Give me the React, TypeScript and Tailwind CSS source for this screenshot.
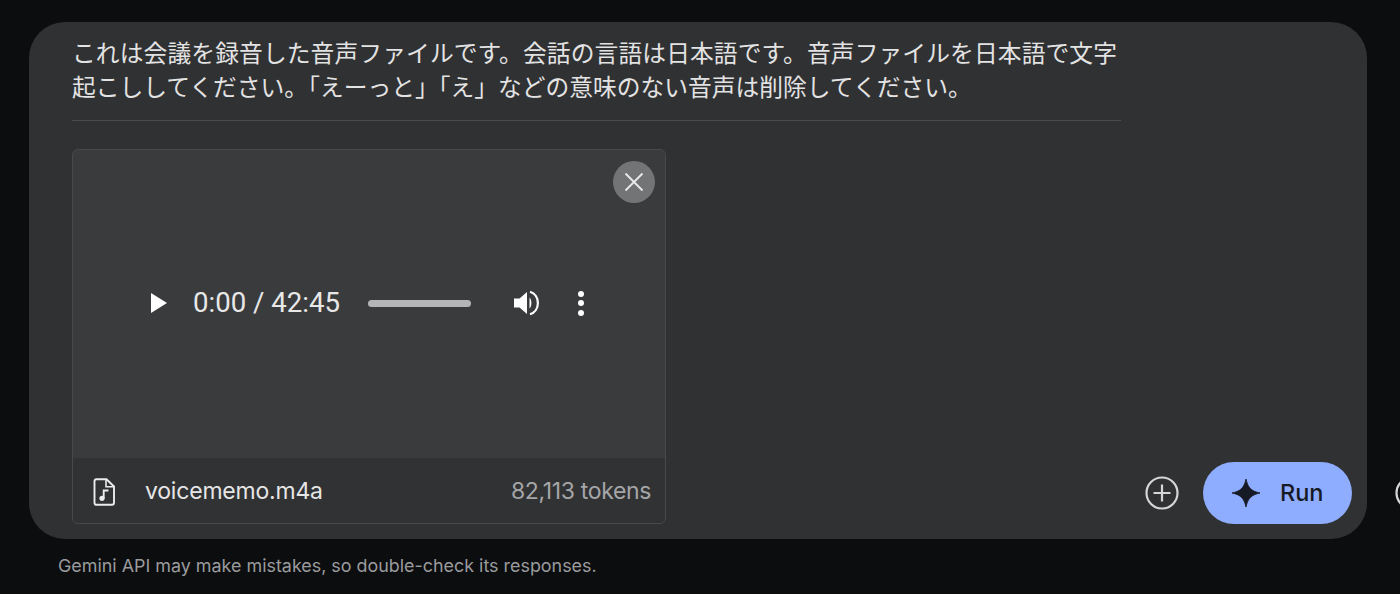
import React from "react";

const CJK = "font-['Inter','Noto_Sans_CJK_JP',sans-serif]";

const AudioBar = () => {
  return (
    <div className="flex h-[308px] items-center pb-[2px] pl-[77px]">
      <svg width="20" height="22" viewBox="0 0 20 22" className="mr-[24px] -ml-[1px]">
        <path d="M2 1 L18 11 L2 21 Z" fill="#fff" />
      </svg>
      <span className="w-[148px] whitespace-nowrap text-[27.6px] leading-none text-[#e8e8e8] font-['Roboto',sans-serif]">
        0:00 / 42:45
      </span>
      <div className="ml-[27px] h-[7px] w-[103px] rounded-full bg-[#b5b5b5]" />
      <svg width="28" height="28" viewBox="0 0 28 28" className="ml-[42px]">
        <path d="M1 9.5 H6.5 L14 3 V25 L6.5 18.5 H1 Z" fill="#fff" />
        <path d="M16.5 8.5 C19 10.5 19 17.5 16.5 19.5 Z" fill="#fff" />
        <path d="M17 2.8 C27.5 6 27.5 22 17 25.2" fill="none" stroke="#fff" strokeWidth="2.2" />
      </svg>
      <div className="ml-[37px] flex flex-col gap-[3.5px]">
        <div className="h-[6px] w-[6px] rounded-full bg-white" />
        <div className="h-[6px] w-[6px] rounded-full bg-white" />
        <div className="h-[6px] w-[6px] rounded-full bg-white" />
      </div>
    </div>
  );
};

const AudioCard = () => {
  return (
    <div className="relative w-[594px] overflow-hidden rounded-[6px] border border-[#48494b] bg-[#3a3b3d]">
      <button className="absolute top-[11px] right-[10px] flex h-[42px] w-[42px] items-center justify-center rounded-full bg-[#737476]">
        <svg width="22" height="22" viewBox="0 0 22 22" fill="none" stroke="#ebebeb" strokeWidth="1.8">
          <path d="M2.5 2.5 L19.5 19.5 M19.5 2.5 L2.5 19.5" />
        </svg>
      </button>
      <AudioBar />
      <div className="flex h-[65px] items-center bg-[#313234] pt-[2px] pr-[14px] pl-[20px]">
        <svg width="24" height="28" viewBox="0 0 24 28" fill="none" className="mr-[29px] -ml-[1px]">
          <path
            d="M2.5 3.2 C2.5 2 3.2 1.2 4.5 1.2 H14.5 L22 8.5 V24.8 C22 26 21.2 26.8 20 26.8 H4.5 C3.2 26.8 2.5 26 2.5 24.8 Z"
            stroke="#ececec"
            strokeWidth="1.9"
          />
          <path d="M14 1.5 V8.8 H21.5" stroke="#ececec" strokeWidth="1.6" />
          <circle cx="10" cy="20.3" r="2.6" fill="#ececec" />
          <path d="M11.7 20.3 V12.5 H16.5" stroke="#ececec" strokeWidth="1.9" />
        </svg>
        <span className="text-[23px] leading-none text-[#e6e6e6] font-['Inter',sans-serif] tracking-[-0.2px]">
          voicememo.m4a
        </span>
        <span className="ml-auto text-[23px] leading-none text-[#a5a6a8] font-['Inter',sans-serif] tracking-[-0.35px]">
          82,113 tokens
        </span>
      </div>
    </div>
  );
};

const PlusCircle = ({ size = 34 }: { size?: number }) => {
  return (
    <svg width={size} height={size} viewBox="0 0 34 34" fill="none" stroke="#d6d6d6" strokeWidth="2.2">
      <circle cx="17" cy="17" r="15.5" />
      <path d="M17 8.5 V25.5 M8.5 17 H25.5" />
    </svg>
  );
};

export default function App() {
  return (
    <div className={`h-[594px] w-[1400px] overflow-hidden bg-[#0c0d0f] pt-[22px] pl-[29px] ${CJK}`}>
      <div className="flex items-start">
        <div className="flex h-[517px] w-[1338px] shrink-0 rounded-[36px] bg-[#303133] pt-[15px] pr-[15px] pb-[15px] pl-[43px]">
          <div className="w-[1049px] shrink-0">
            <p className="h-[84px] border-b border-[#4a4b4d] text-[23.75px] leading-[34px] whitespace-nowrap text-[#e3e3e3]">
              <span className="tracking-[0.11px]">これは会議を録音した音声ファイルです。会話の言語は日本語です。音声ファイルを日本語で文字</span>
              <br />
              起こししてください。「えーっと」「え」などの意味のない音声は削除してください。
            </p>
            <div className="mt-[28px]">
              <AudioCard />
            </div>
          </div>
          <div className="ml-auto flex items-end gap-[24px]">
            <div className="mb-[14px]">
              <PlusCircle />
            </div>
            <button className="flex h-[62px] w-[149px] items-center rounded-full bg-[#8fadff] pl-[29px]">
              <svg width="28" height="28" viewBox="0 0 28 28">
                <path d="M14 0 C15.8 8.6 19.4 12.2 28 14 C19.4 15.8 15.8 19.4 14 28 C12.2 19.4 8.6 15.8 0 14 C8.6 12.2 12.2 8.6 14 0 Z" fill="#161a24" stroke="#161a24" strokeWidth="0.8" />
              </svg>
              <span className="ml-[20px] text-[23.5px] leading-none font-medium text-[#161a24] font-['Inter',sans-serif]">Run</span>
            </button>
          </div>
        </div>
        <div className="mt-[454px] ml-[28px] shrink-0">
          <PlusCircle />
        </div>
      </div>
      <p className="mt-[16px] ml-[29px] text-[17.9px] leading-[22px] text-[#9a9b9d] font-['Inter',sans-serif]">
        Gemini API may make mistakes, so double-check its responses.
      </p>
    </div>
  );
}
